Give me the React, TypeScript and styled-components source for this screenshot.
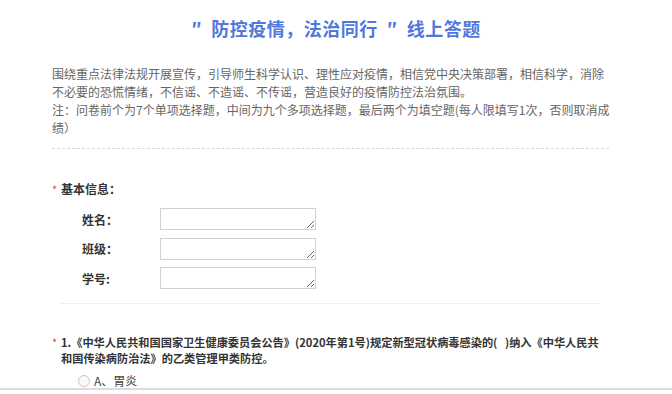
import React from "react";
import styled, { createGlobalStyle } from "styled-components";

const Global = createGlobalStyle`
  html, body { margin: 0; padding: 0; background: #fff; }
  body { font-family: "Noto Sans CJK SC", "Noto Sans", sans-serif; color: #333; }
  * { box-sizing: border-box; }
`;

const Page = styled.div`
  width: 672px;
  height: 390px;
  overflow: hidden;
  border-bottom: 2px solid #dcdcdc;
  background: #fff;
`;

const Title = styled.h1`
  margin: 15px 0 0;
  text-align: center;
  font-size: 18px;
  line-height: 27px;
  font-weight: bold;
  letter-spacing: 0.5px;
  color: #5078dc;
  white-space: pre;
`;

const Content = styled.div`
  margin-left: 52px;
  width: 560px;
`;

const Intro = styled.p`
  margin: 23px 0 0;
  font-size: 12px;
  line-height: 18px;
  color: #666;
`;

const Dotted = styled.div`
  margin-top: 11px;
  width: 557px;
  border-top: 1px dashed #d6d6d6;
`;

const Section = styled.div`
  margin-top: 31px;
`;

const Head = styled.div`
  display: flex;
  align-items: flex-start;
  font-size: 12px;
  line-height: 18px;
  font-weight: bold;
  color: #333;
`;

const Star = styled.span`
  color: #e8473f;
  width: 9px;
  flex: none;
  font-weight: normal;
  font-size: 11px;
`;

const Fields = styled.div`
  margin-top: 10px;
  padding-left: 30px;
  display: flex;
  flex-direction: column;
  gap: 7.5px;
`;

const Field = styled.div`
  display: flex;
  align-items: center;
  height: 22px;
`;

const Label = styled.span`
  width: 78px;
  font-size: 12px;
  font-weight: bold;
  color: #333;
`;

const Input = styled.textarea`
  width: 156px;
  height: 22px;
  margin: 0;
  padding: 2px 4px;
  border: 1px solid #d0d0d0;
  border-radius: 0;
  resize: both;
  font-size: 12px;
  font-family: inherit;
  background: #fff;
`;

const Separator = styled.div`
  margin: 14px 0 0 8px;
  width: 540px;
  border-top: 1px solid #efefef;
`;

const Question = styled.div`
  margin-top: 30px;
  display: flex;
  align-items: flex-start;
  font-size: 11.2px;
  line-height: 16px;
  font-weight: bold;
  color: #333;
`;

const QText = styled.div`
  width: 545px;
`;

const Option = styled.label`
  display: flex;
  align-items: center;
  margin: 6px 0 0 26px;
  font-size: 12px;
  line-height: 18px;
  color: #444;
`;

const Radio = styled.span`
  width: 12px;
  height: 12px;
  border-radius: 50%;
  border: 1px solid #c8c8c8;
  background: #fafafa;
  margin-right: 4px;
  flex: none;
`;

const fields = ["姓名：", "班级：", "学号:"];

export default function App() {
  return (
    <>
      <Global />
      <Page>
        <Title>{"″  防控疫情，法治同行  ″  线上答题"}</Title>
        <Content>
          <Intro>
            围绕重点法律法规开展宣传，引导师生科学认识、理性应对疫情，相信党中央决策部署，相信科学，消除不必要的恐慌情绪，不信谣、不造谣、不传谣，营造良好的疫情防控法治氛围。
            <br />
            注：问卷前个为7个单项选择题，中间为九个多项选择题，最后两个为填空题(每人限填写1次，否则取消成绩）
          </Intro>
          <Dotted />
          <Section>
            <Head>
              <Star>*</Star>
              基本信息：
            </Head>
            <Fields>
              {fields.map((f) => (
                <Field key={f}>
                  <Label>{f}</Label>
                  <Input />
                </Field>
              ))}
            </Fields>
            <Separator />
          </Section>
          <Question>
            <Star>*</Star>
            <QText>
              1.《中华人民共和国国家卫生健康委员会公告》(2020年第1号)规定新型冠状病毒感染的(&nbsp;&nbsp;&nbsp;)纳入《中华人民共和国传染病防治法》的乙类管理甲类防控。
            </QText>
          </Question>
          <Option>
            <Radio />
            A、胃炎
          </Option>
        </Content>
      </Page>
    </>
  );
}
